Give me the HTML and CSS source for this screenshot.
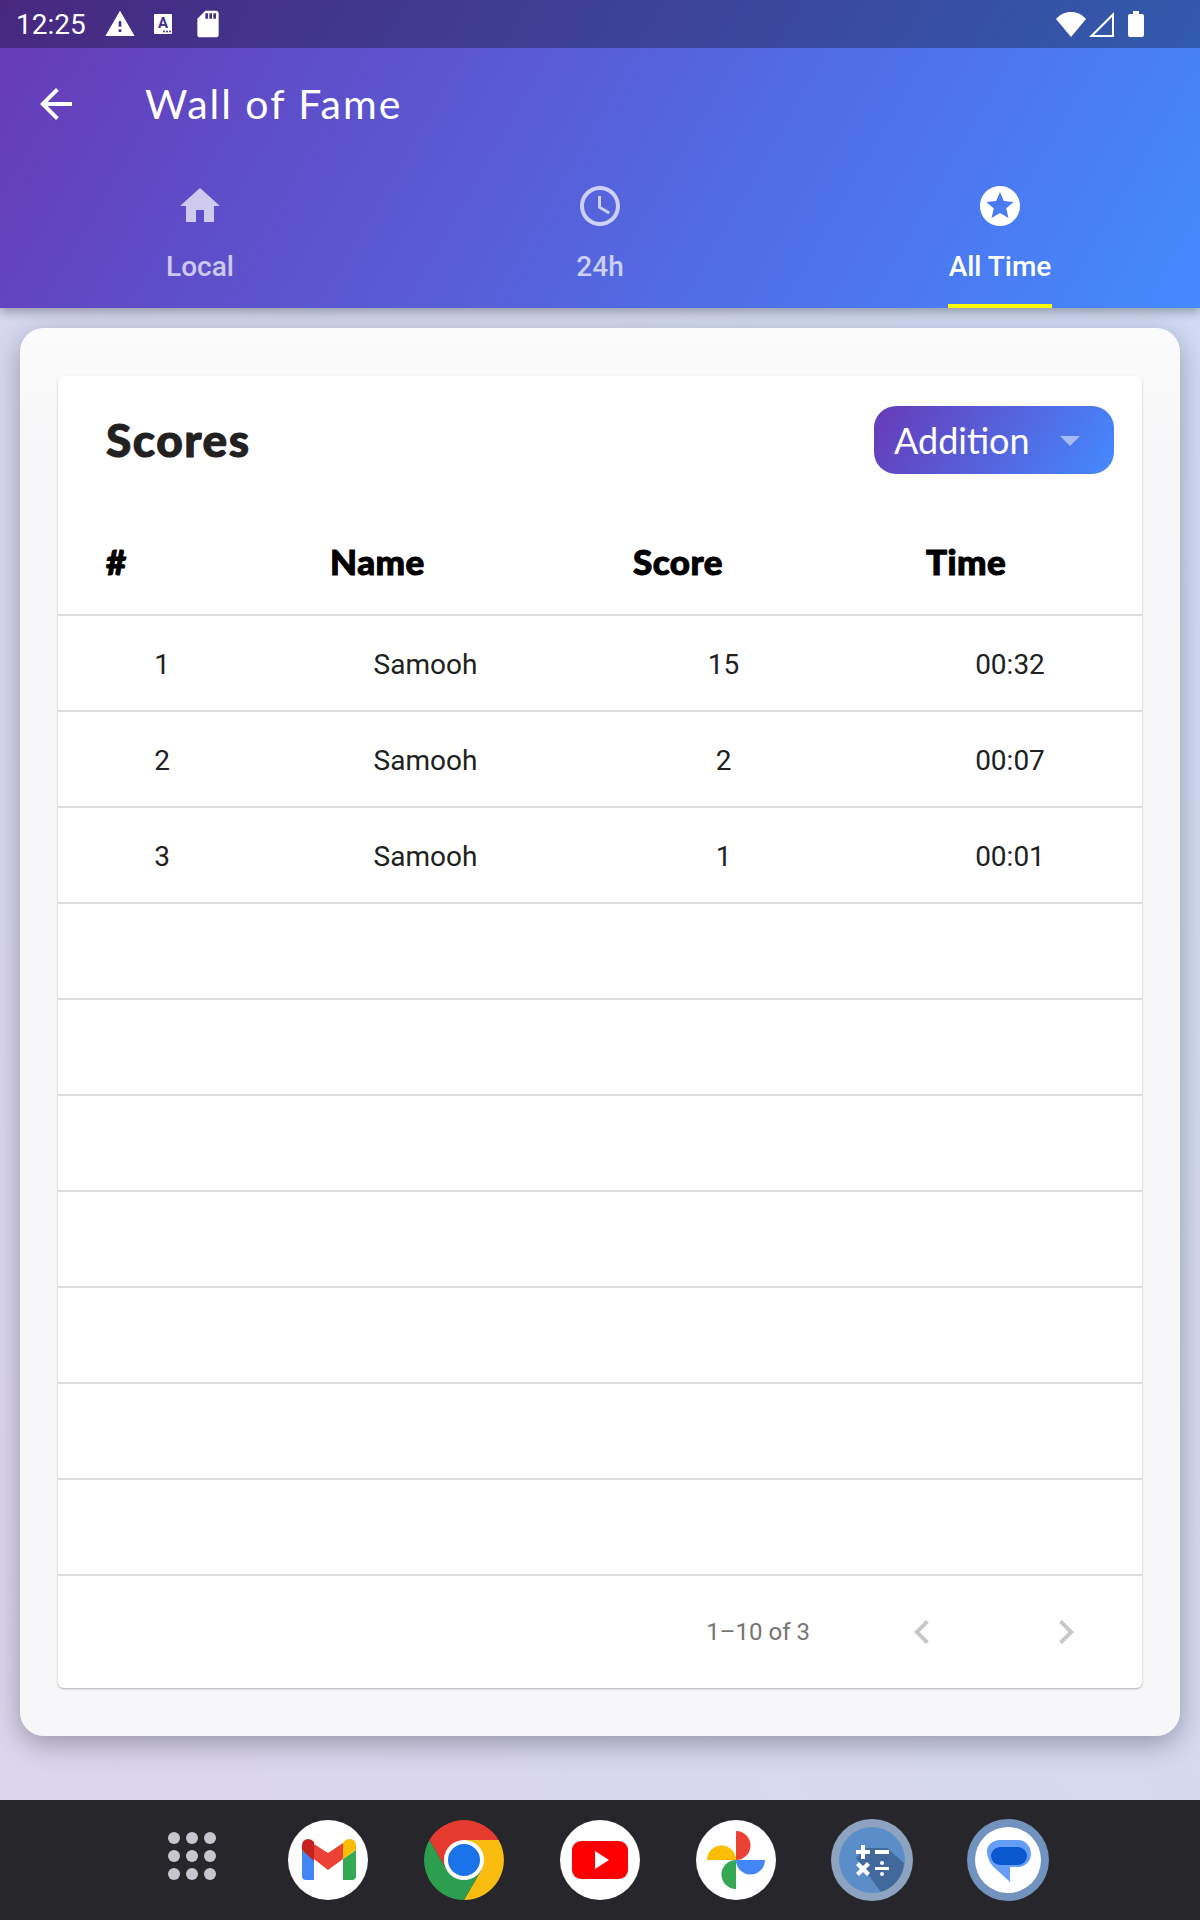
FILE: index.html
```html
<!DOCTYPE html>
<html lang="en">
<head>
    <meta charset="UTF-8">
    <meta name="viewport" content="width=device-width, initial-scale=1.0">
    <title>Wall of Fame</title>
    <link rel="stylesheet" href="styles.css">
</head>
<body>
    <header class="header">
        <div class="status-bar">
            <span class="clock">12:25</span>
            <svg class="status-icon warn-icon" viewBox="0 0 24 24"><path d="M1 21h22L12 2 1 21zm12-3h-2v-2h2v2zm0-4h-2v-4h2v4z"/></svg>
            <svg class="status-icon sim-icon" viewBox="0 0 18 20">
                <path d="M1 0h16a1 1 0 0 1 1 1v18a1 1 0 0 1-1 1H1a1 1 0 0 1-1-1V1a1 1 0 0 1 1-1z"/>
                <text class="sim-letter" x="9" y="14">A</text>
                <circle class="sim-dot" cx="10" cy="17.500" r="1"/><circle class="sim-dot" cx="13" cy="17.500" r="1"/><circle class="sim-dot" cx="16" cy="17.500" r="1"/>
            </svg>
            <svg class="status-icon sd-icon" viewBox="0 0 24 24"><path d="M18 2h-8L4.020 8 4 20c0 1.100.9 2 2 2h12c1.100 0 2-.9 2-2V4c0-1.100-.9-2-2-2zm-6 6h-2V4h2v4zm3 0h-2V4h2v4zm3 0h-2V4h2v4z"/></svg>
            <span class="status-spacer"></span>
            <svg class="status-icon wifi-icon" viewBox="0 0 30 26"><path d="M15 26 L30 8 C26 3.500 21 1 15 1 S4 3.500 0 8z"/></svg>
            <svg class="status-icon signal-icon" viewBox="0 0 25 25"><path fill-rule="evenodd" d="M25 0V25H0zM23 5 5 23H23z"/></svg>
            <svg class="status-icon battery-icon" viewBox="0 0 16 26"><path d="M5 0h6v3h3a2 2 0 0 1 2 2v19a2 2 0 0 1-2 2H2a2 2 0 0 1-2-2V5a2 2 0 0 1 2-2h3z"/></svg>
        </div>

        <div class="app-bar">
            <svg class="back-icon" viewBox="0 0 24 24"><path d="M20 11H7.830l5.590-5.590L12 4l-8 8 8 8 1.410-1.410L7.830 13H20v-2z"/></svg>
            <h1 class="page-title">Wall of Fame</h1>
        </div>

        <nav class="tabs">
            <div class="tab">
                <svg class="tab-icon" viewBox="0 0 24 24"><path d="M10 20v-6h4v6h5v-8h3L12 3 2 12h3v8z"/></svg>
                <span class="tab-label">Local</span>
            </div>
            <div class="tab">
                <svg class="tab-icon" viewBox="0 0 24 24"><path d="M11.990 2C6.470 2 2 6.480 2 12s4.470 10 9.990 10C17.520 22 22 17.520 22 12S17.520 2 11.990 2zM12 20c-4.420 0-8-3.580-8-8s3.580-8 8-8 8 3.580 8 8-3.580 8-8 8z"/><path d="M12.500 7H11v6l5.250 3.150.75-1.230-4.500-2.670z"/></svg>
                <span class="tab-label">24h</span>
            </div>
            <div class="tab tab-active">
                <svg class="tab-icon" viewBox="0 0 24 24"><path d="M11.990 2C6.470 2 2 6.480 2 12s4.470 10 9.990 10C17.520 22 22 17.520 22 12S17.520 2 11.990 2zm4.240 16L12 15.450 7.770 18l1.120-4.810-3.730-3.230 4.920-.42L12 5l1.920 4.530 4.920.42-3.730 3.230L16.230 18z"/></svg>
                <span class="tab-label">All Time</span>
            </div>
        </nav>
    </header>

    <main class="card">
        <section class="panel">
            <div class="panel-top">
                <h2 class="panel-title">Scores</h2>
                <div class="select">
                    <span>Addition</span>
                    <span class="select-arrow"></span>
                </div>
            </div>

            <table class="scores">
                <colgroup>
                    <col class="col-rank"><col class="col-name"><col class="col-score"><col class="col-time">
                </colgroup>
                <thead>
                    <tr><th>#</th><th>Name</th><th>Score</th><th>Time</th></tr>
                </thead>
                <tbody>
                    <tr><td>1</td><td>Samooh</td><td>15</td><td>00:32</td></tr>
                    <tr><td>2</td><td>Samooh</td><td>2</td><td>00:07</td></tr>
                    <tr><td>3</td><td>Samooh</td><td>1</td><td>00:01</td></tr>
                    <tr><td></td><td></td><td></td><td></td></tr>
                    <tr><td></td><td></td><td></td><td></td></tr>
                    <tr><td></td><td></td><td></td><td></td></tr>
                    <tr><td></td><td></td><td></td><td></td></tr>
                    <tr><td></td><td></td><td></td><td></td></tr>
                    <tr><td></td><td></td><td></td><td></td></tr>
                    <tr><td></td><td></td><td></td><td></td></tr>
                </tbody>
            </table>

            <div class="pager">
                <span class="pager-text">1–10 of 3</span>
                <svg class="pager-icon" viewBox="0 0 24 24"><path d="M15.410 7.410L14 6l-6 6 6 6 1.410-1.410L10.830 12z"/></svg>
                <svg class="pager-icon" viewBox="0 0 24 24"><path d="M10 6L8.590 7.410 13.170 12l-4.580 4.590L10 18l6-6z"/></svg>
            </div>
        </section>
    </main>

    <footer class="dock">
        <div class="dock-item apps-grid">
            <span></span><span></span><span></span>
            <span></span><span></span><span></span>
            <span></span><span></span><span></span>
        </div>
        <svg class="dock-item" viewBox="0 0 80 80">
            <circle cx="40" cy="40" r="40" fill="#fff"/>
            <path fill="#4285f4" d="M14 30 26 39V60H18a4 4 0 0 1-4-4z"/>
            <path fill="#34a853" d="M68 30 55 39V60H64a4 4 0 0 0 4-4z"/>
            <path fill="#ea4335" d="M26 24 40 33 55 23V39L40 50 26 39z"/>
            <path fill="#c5221f" d="M14 30V25A6 6 0 0 1 20 19 8 8 0 0 1 26 22V41z"/>
            <path fill="#fbbc04" d="M68 30V25A6 6 0 0 0 62 19 8 8 0 0 0 55 23V39z"/>
        </svg>
        <svg class="dock-item" viewBox="0 0 80 80">
            <path fill="#e53b2e" d="M5.400 20A40 40 0 0 1 74.600 20H40L22.700 50z"/>
            <path fill="#fbbc10" d="M74.600 20A40 40 0 0 1 40 80L57.300 50 40 20z"/>
            <path fill="#2b9e4f" d="M40 80A40 40 0 0 1 5.400 20L22.700 50H57.300z"/>
            <circle cx="40" cy="40" r="20" fill="#fff"/>
            <circle cx="40" cy="40" r="16" fill="#1a73e8"/>
        </svg>
        <svg class="dock-item" viewBox="0 0 80 80">
            <circle cx="40" cy="40" r="40" fill="#fff"/>
            <rect x="12" y="21" width="56" height="38" rx="9" fill="#f00"/>
            <path fill="#fff" d="M35 31 49 40 35 49z"/>
        </svg>
        <svg class="dock-item" viewBox="0 0 80 80">
            <circle cx="40" cy="40" r="40" fill="#fff"/>
            <path fill="#ea4335" d="M40 11A14.500 14.500 0 0 1 40 40z"/>
            <path fill="#4285f4" d="M69 40A14.500 14.500 0 0 1 40 40z"/>
            <path fill="#34a853" d="M40 69A14.500 14.500 0 0 1 40 40z"/>
            <path fill="#fbbc04" d="M11 40A14.500 14.500 0 0 1 40 40z"/>
        </svg>
        <svg class="dock-item" viewBox="0 0 80 80">
            <circle cx="40" cy="40" r="41" fill="#8da3bf"/>
            <circle cx="40" cy="40" r="33" fill="#5b8ec9"/>
            <path fill="#41699b" d="M24 38 34 28H55L72 43A33 33 0 0 1 49 72z"/>
            <path fill="#fff" d="M29 25h4v5h5v4h-5v5h-4v-5h-5v-4h5zM43 30h14v4H43zM27 42l4 4 4-4 3 3-4 4 4 4-3 3-4-4-4 4-3-3 4-4-4-4zM43 47h14v3H43z"/>
            <circle cx="50" cy="43" r="2" fill="#fff"/>
            <circle cx="50" cy="54" r="2" fill="#fff"/>
        </svg>
        <svg class="dock-item" viewBox="0 0 80 80">
            <circle cx="40" cy="40" r="41" fill="#7393bf"/>
            <circle cx="40" cy="40" r="33" fill="#fff"/>
            <path fill="#669df6" d="M32 20H50C58 20 63 27 63 34 63 41 57 47 50 47H42V62L29 50C23 46 19 38 19 31 19 25 25 20 32 20z"/>
            <rect x="23" y="27" width="36" height="18" rx="9" fill="#0b57d0"/>
        </svg>
    </footer>
</body>
</html>
```

FILE: styles.css
```css
* {
    box-sizing: border-box;
}
html, body {
    height: 100%;
}
body {
    margin: 0;
    display: flex;
    flex-direction: column;
    font-family: Roboto, sans-serif;
    background: linear-gradient(to top right, #ddd5ec, #cfddf5);
}

/* top gradient area */
.header {
    height: 308px;
    color: #fff;
    background: linear-gradient(120deg, #673ab7, #448aff);
    box-shadow: 0 4px 10px rgba(0,0,0,.3);
    position: relative;
}
.status-bar {
    height: 48px;
    display: flex;
    align-items: center;
    padding: 0 56px 0 16px;
    background-color: rgba(0,0,0,.3);
}
.clock {
    font-size: 28px;
    width: 71px;
}
.status-icon {
    fill: #fff;
    flex: none;
}
.warn-icon {
    width: 32px;
    height: 32px;
    margin-left: 17px;
}
.sim-icon {
    width: 18px;
    height: 20px;
    margin-left: 18px;
}
.sim-letter {
    fill: #3f2f8f;
    font-family: Roboto, sans-serif;
    font-size: 15px;
    font-weight: 700;
    text-anchor: middle;
}
.sim-dot {
    fill: #3f2f8f;
}
.sd-icon {
    width: 32px;
    height: 32px;
    margin-left: 20px;
}
.status-spacer {
    flex: 1;
}
.wifi-icon {
    width: 30px;
    height: 26px;
}
.signal-icon {
    width: 25px;
    height: 25px;
    margin-left: 3px;
}
.battery-icon {
    width: 16px;
    height: 26px;
    margin-left: 14px;
}
.app-bar {
    height: 112px;
    display: flex;
    align-items: center;
    padding-left: 32px;
}
.back-icon {
    width: 48px;
    height: 48px;
    fill: #fff;
}
.page-title {
    margin: 0 0 2px 65px;
    font-family: Lato, sans-serif;
    font-size: 41px;
    font-weight: 400;
    letter-spacing: 2px;
}
.tabs {
    display: flex;
    height: 148px;
}
.tab {
    flex: 1;
    display: flex;
    flex-direction: column;
    align-items: center;
    padding-top: 22px;
    color: rgba(255,255,255,.7);
    fill: rgba(255,255,255,.7);
}
.tab-icon {
    width: 48px;
    height: 48px;
}
.tab-label {
    font-size: 28px;
    font-weight: 500;
    line-height: 38px;
    margin-top: 18px;
    padding: 0 1px;
    height: 60px;
}
.tab-active {
    color: #fff;
    fill: #fff;
}
.tab-active .tab-label {
    border-bottom: 4px solid #ff0;
}

/* white card */
.card {
    margin: 20px 20px 0;
    height: 1408px;
    padding: 48px 38px;
    border-radius: 24px;
    background: linear-gradient(#fbfbfc, #f7f7f9 120px);
    box-shadow: 0 8px 28px rgba(0,0,0,.3);
}
.panel {
    background-color: #fff;
    border-radius: 6px;
    box-shadow: 0 1px 2px rgba(0,0,0,.3);
}
.panel-top {
    height: 143px;
    display: flex;
    justify-content: space-between;
    align-items: flex-start;
    padding: 30px 28px 0 48px;
}
.panel-title {
    margin: 0;
    height: 68px;
    line-height: 68px;
    font-family: Lato, sans-serif;
    font-size: 46px;
    font-weight: 900;
    letter-spacing: 1.500px;
    -webkit-text-stroke: 1px #212121;
    color: #212121;
}
.select {
    width: 240px;
    height: 68px;
    display: flex;
    align-items: center;
    padding-left: 20px;
    border-radius: 22px;
    color: #fff;
    font-family: Lato, sans-serif;
    font-size: 36px;
    background: linear-gradient(120deg, #673ab7, #448aff);
    position: relative;
}
.select-arrow {
    position: absolute;
    right: 34px;
    top: 30px;
    border-left: 10px solid transparent;
    border-right: 10px solid transparent;
    border-top: 10px solid rgba(255,255,255,.5);
}
.scores {
    width: 100%;
    border-collapse: collapse;
    table-layout: fixed;
}
.col-rank {
    width: 224px;
}
.col-name {
    width: 303px;
}
.col-score {
    width: 293px;
}
.col-time {
    width: 264px;
}
.scores tr {
    height: 96px;
    border-bottom: 2px solid #e0e0e0;
}
.scores th, .scores td {
    padding: 0 64px 0 48px;
}
.scores th:last-child, .scores td:last-child {
    padding-right: 48px;
}
.scores th {
    padding-bottom: 12px;
    text-align: left;
    font-family: Lato, sans-serif;
    font-size: 35px;
    font-weight: 900;
    letter-spacing: .5px;
    -webkit-text-stroke: 1px #000;
    color: #000;
}
.scores td {
    padding-top: 2px;
    text-align: center;
    font-size: 28px;
    color: #212121;
}
.pager {
    height: 112px;
    display: flex;
    align-items: center;
    justify-content: flex-end;
    padding-right: 52px;
}
.pager-text {
    font-size: 24px;
    color: #757575;
    margin-right: 88px;
}
.pager-icon {
    width: 48px;
    height: 48px;
    fill: #c8c8c8;
}
.pager-icon + .pager-icon {
    margin-left: 96px;
}

/* bottom dock */
.dock {
    margin-top: auto;
    height: 120px;
    flex: none;
    display: flex;
    align-items: center;
    justify-content: center;
    gap: 56px;
    background-color: #26262b;
}
.dock-item {
    width: 80px;
    height: 80px;
    flex: none;
    overflow: visible;
}
.apps-grid {
    display: grid;
    grid-template-columns: repeat(3, 12px);
    grid-auto-rows: 12px;
    gap: 6px;
    justify-content: center;
    align-content: center;
    padding-bottom: 8px;
}
.apps-grid span {
    border-radius: 50%;
    background-color: #c8c5d0;
}
```
